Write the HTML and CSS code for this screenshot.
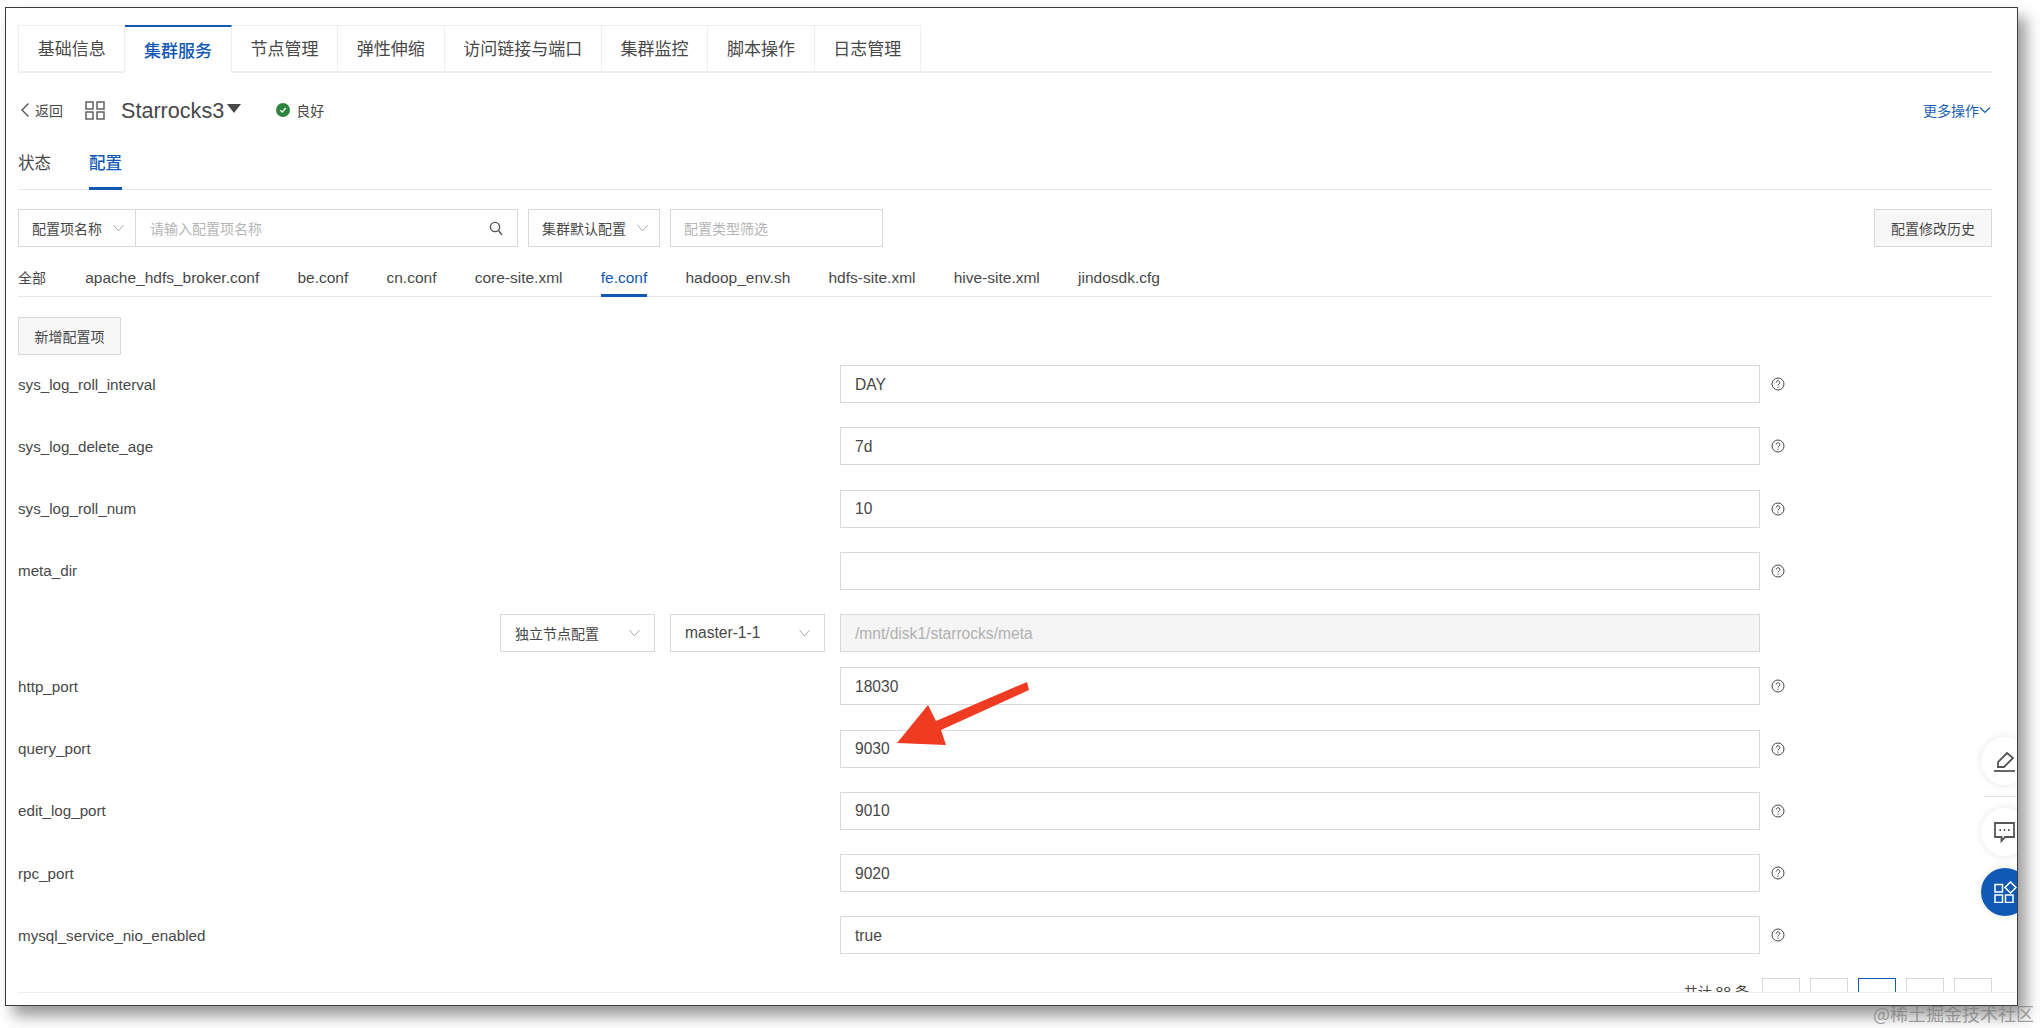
FILE: index.html
```html
<!DOCTYPE html>
<html lang="zh-CN">

<head>
    <meta charset="UTF-8">
    <meta name="viewport" content="width=device-width, initial-scale=1.0">
    <title>Starrocks3 配置</title>
    <link rel="stylesheet" href="styles.css">
</head>

<body>
    <div class="window">
        <div class="main-tabs">
            <div class="main-tab">基础信息</div>
            <div class="main-tab active">集群服务</div>
            <div class="main-tab">节点管理</div>
            <div class="main-tab">弹性伸缩</div>
            <div class="main-tab">访问链接与端口</div>
            <div class="main-tab">集群监控</div>
            <div class="main-tab">脚本操作</div>
            <div class="main-tab">日志管理</div>
        </div>

        <div class="title-row">
            <div class="back">
                <svg width="10" height="16" viewBox="0 0 10 16"><path d="M8.500 1.500 2 8l6.500 6.500" class="line"/></svg>
                <span>返回</span>
            </div>
            <svg class="grid-icon" width="20" height="19" viewBox="0 0 20 19">
                <rect x="1" y="1" width="7" height="7" class="line"/>
                <rect x="12" y="1" width="7" height="7" class="line"/>
                <rect x="1" y="11" width="7" height="7" class="line"/>
                <rect x="12" y="11" width="7" height="7" class="line"/>
            </svg>
            <span class="cluster-name">Starrocks3</span>
            <span class="caret"></span>
            <svg class="status-icon" width="14" height="14" viewBox="0 0 14 14">
                <circle cx="7" cy="7" r="7" fill="#2e8540"/>
                <path d="M4.200 7.200 6.200 9.200 9.800 5" fill="none" stroke="#fff" stroke-width="1.200"/>
            </svg>
            <span class="status-text">良好</span>
            <div class="more">更多操作
                <svg width="12" height="8" viewBox="0 0 12 8"><path d="M1 1.500 6 6.500l5-5" fill="none" stroke="#1b5fb5" stroke-width="1.200"/></svg>
            </div>
        </div>

        <div class="sub-tabs">
            <div class="sub-tab">状态</div>
            <div class="sub-tab active">配置</div>
        </div>

        <div class="filter-row">
            <div class="search-group">
                <div class="select name-select">配置项名称<svg class="chev" width="11" height="8" viewBox="0 0 11 8"><path d="M.5 1 5.500 7l5-6"/></svg></div>
                <div class="search-input">
                    <span class="placeholder">请输入配置项名称</span>
                    <svg width="14" height="15" viewBox="0 0 14 15"><circle cx="6" cy="6" r="4.600" class="line"/><path d="M9.500 9.500 13 14" class="line"/></svg>
                </div>
            </div>
            <div class="select default-select">集群默认配置<svg class="chev" width="11" height="8" viewBox="0 0 11 8"><path d="M.5 1 5.500 7l5-6"/></svg></div>
            <div class="select type-select"><span class="placeholder">配置类型筛选</span></div>
            <div class="btn history-btn">配置修改历史</div>
        </div>

        <div class="file-tabs">
            <div class="file-tab">全部</div>
            <div class="file-tab">apache_hdfs_broker.conf</div>
            <div class="file-tab">be.conf</div>
            <div class="file-tab">cn.conf</div>
            <div class="file-tab">core-site.xml</div>
            <div class="file-tab active">fe.conf</div>
            <div class="file-tab">hadoop_env.sh</div>
            <div class="file-tab">hdfs-site.xml</div>
            <div class="file-tab">hive-site.xml</div>
            <div class="file-tab">jindosdk.cfg</div>
        </div>

        <div class="btn add-btn">新增配置项</div>

        <div class="form">
            <div class="row">
                <div class="label">sys_log_roll_interval</div>
                <div class="field">DAY</div>
                <svg class="help" viewBox="0 0 14 14"><use href="#help"/></svg>
            </div>
            <div class="row">
                <div class="label">sys_log_delete_age</div>
                <div class="field">7d</div>
                <svg class="help" viewBox="0 0 14 14"><use href="#help"/></svg>
            </div>
            <div class="row">
                <div class="label">sys_log_roll_num</div>
                <div class="field">10</div>
                <svg class="help" viewBox="0 0 14 14"><use href="#help"/></svg>
            </div>
            <div class="row">
                <div class="label">meta_dir</div>
                <div class="field"></div>
                <svg class="help" viewBox="0 0 14 14"><use href="#help"/></svg>
            </div>
            <div class="row node-row">
                <div class="select node-select">独立节点配置<svg class="chev" width="11" height="8" viewBox="0 0 11 8"><path d="M.5 1 5.500 7l5-6"/></svg></div>
                <div class="select node-select node-name">master-1-1<svg class="chev" width="11" height="8" viewBox="0 0 11 8"><path d="M.5 1 5.500 7l5-6"/></svg></div>
                <div class="field disabled">/mnt/disk1/starrocks/meta</div>
            </div>
            <div class="row">
                <div class="label">http_port</div>
                <div class="field">18030</div>
                <svg class="help" viewBox="0 0 14 14"><use href="#help"/></svg>
            </div>
            <div class="row">
                <div class="label">query_port</div>
                <div class="field">9030</div>
                <svg class="help" viewBox="0 0 14 14"><use href="#help"/></svg>
            </div>
            <div class="row">
                <div class="label">edit_log_port</div>
                <div class="field">9010</div>
                <svg class="help" viewBox="0 0 14 14"><use href="#help"/></svg>
            </div>
            <div class="row">
                <div class="label">rpc_port</div>
                <div class="field">9020</div>
                <svg class="help" viewBox="0 0 14 14"><use href="#help"/></svg>
            </div>
            <div class="row">
                <div class="label">mysql_service_nio_enabled</div>
                <div class="field">true</div>
                <svg class="help" viewBox="0 0 14 14"><use href="#help"/></svg>
            </div>
        </div>

        <div class="pager">
            <span class="total">共计 88 条</span>
            <div class="page"></div>
            <div class="page"></div>
            <div class="page current"></div>
            <div class="page"></div>
            <div class="page"></div>
        </div>
        <div class="footer-line"></div>

        <!-- floating tools on the right edge -->
        <div class="float-btn pen">
            <svg width="21" height="21" viewBox="0 0 21 21"><path d="M4 16v-5l9-9 6 5-9 9z" class="line-dark"/><path d="M0 20h21" class="line-dark"/></svg>
        </div>
        <div class="float-sep"></div>
        <div class="float-btn chat">
            <svg width="21" height="21" viewBox="0 0 21 21"><path d="M1 1h19v14H11l-3.500 4v-4H1z" class="line-dark"/><path d="M5.500 8h1.500M9.800 8h1.500M14 8h1.500" class="line-dark"/></svg>
        </div>
        <div class="float-btn apps">
            <svg width="23" height="22" viewBox="0 0 23 22">
                <rect x="1" y="3.500" width="7.500" height="7.500" class="line-white"/>
                <rect x="1" y="14" width="7.500" height="7.500" class="line-white"/>
                <rect x="11.500" y="14" width="7.500" height="7.500" class="line-white"/>
                <path d="M16.500 1l5.500 5.500-5.500 5.500-5.500-5.500z" class="line-white"/>
            </svg>
        </div>

        <svg class="arrow" width="145" height="75" viewBox="0 0 145 75">
            <path d="M7 68 38 30 46 46 137 7 139 15 51 55 56 70z" fill="#ee3b22"/>
        </svg>
    </div>

    <div class="watermark">@稀土掘金技术社区</div>

    <svg width="0" height="0" class="defs">
        <symbol id="help" viewBox="0 0 14 14">
            <circle cx="7" cy="7" r="6" fill="none" stroke="#444" stroke-width="1"/>
            <path d="M5.200 5.500a1.800 1.800 0 1 1 2.800 1.500c-.7.4-1 .8-1 1.500" fill="none" stroke="#444" stroke-width="1"/>
            <circle cx="7" cy="10.200" r=".6" fill="#444"/>
        </symbol>
    </svg>
</body>

</html>
```

FILE: styles.css
```css
* {
    box-sizing: border-box;
}

body {
    margin: 0;
    height: 1028px;
    overflow: hidden;
    position: relative;
    background-color: #fff;
    font-family: "Liberation Sans", "Noto Sans CJK SC", sans-serif;
    font-size: 14px;
    color: #484848;
}

.line {
    fill: none;
    stroke: #555;
    stroke-width: 1.4;
}

.line-dark {
    fill: none;
    stroke: #555;
    stroke-width: 1.800;
}

.line-white {
    fill: none;
    stroke: #fff;
    stroke-width: 1.500;
}

.defs {
    position: absolute;
}

.window {
    position: relative;
    width: 2013px;
    height: 999px;
    margin: 7px 0 0 5px;
    padding: 17px 25px 0 12px;
    background-color: #fff;
    border: 1px solid #3c3c3c;
    box-shadow: 8px 10px 14px rgba(0, 0, 0, 0.4);
    overflow: hidden;
}

.main-tabs {
    display: flex;
    height: 48px;
    border-bottom: 2px solid #eee;
}

.main-tab {
    display: flex;
    align-items: center;
    justify-content: center;
    height: 47px;
    padding: 0 18.700px 2px;
    font-size: 17px;
    background-color: #fff;
    border: 1px solid #eee;
    border-left: none;
}

.main-tab:first-child {
    border-left: 1px solid #eee;
}

.main-tab.active {
    height: 48px;
    color: #1259b4;
    font-weight: 500;
    border-top: 2px solid #1259b4;
    border-bottom: none;
}

.title-row {
    display: flex;
    align-items: center;
    height: 74px;
    padding-right: 1px;
}

.back {
    display: flex;
    align-items: center;
    gap: 5px;
    width: 67px;
    padding-left: 2px;
}

.grid-icon {
    margin-right: 16px;
}

.cluster-name {
    font-size: 21.600px;
    padding-top: 2px;
}

.caret {
    width: 0;
    height: 0;
    margin: -4px 35px 0 3px;
    border-left: 7px solid transparent;
    border-right: 7px solid transparent;
    border-top: 9px solid #484848;
}

.status-text {
    margin-left: 6px;
}

.more {
    display: flex;
    align-items: center;
    margin-left: auto;
    color: #1b5fb5;
}

.sub-tabs {
    display: flex;
    gap: 38px;
    height: 43px;
    border-bottom: 1px solid #e6e6e6;
}

.sub-tab {
    height: 43px;
    font-size: 16.500px;
    line-height: 22px;
    padding-top: 5px;
}

.sub-tab.active {
    color: #1259b4;
    font-weight: 500;
    border-bottom: 3px solid #1259b4;
}

.filter-row {
    display: flex;
    align-items: center;
    margin-top: 19px;
    height: 38px;
}

.search-group {
    display: flex;
    width: 500px;
    margin-right: 10px;
}

.select {
    display: flex;
    align-items: center;
    justify-content: space-between;
    height: 38px;
    padding: 0 11px 0 13px;
    background-color: #fff;
    border: 1px solid #d9d9d9;
}

.chev {
    flex-shrink: 0;
    fill: none;
    stroke: #aaa;
    stroke-width: 1;
}

.name-select {
    width: 118px;
}

.search-input {
    display: flex;
    align-items: center;
    justify-content: space-between;
    flex: 1;
    height: 38px;
    padding: 0 14px;
    border: 1px solid #d9d9d9;
    border-left: none;
}

.placeholder {
    color: #b5b5b5;
}

.default-select {
    width: 132px;
    margin-right: 10px;
}

.type-select {
    width: 213px;
}

.btn {
    display: flex;
    align-items: center;
    justify-content: center;
    height: 38px;
    background-color: #f7f7f7;
    border: 1px solid #d9d9d9;
}

.history-btn {
    width: 118px;
    margin-left: auto;
}

.file-tabs {
    display: flex;
    gap: 38.200px;
    height: 50px;
    border-bottom: 1px solid #e6e6e6;
}

.file-tab {
    height: 50px;
    padding-top: 21px;
    line-height: 20px;
    font-size: 15.500px;
}

.file-tab:first-child {
    font-size: 14px;
    margin-right: 1px;
}

.file-tab.active {
    color: #1259b4;
    font-weight: 500;
    border-bottom: 3px solid #1259b4;
}

.add-btn {
    width: 103px;
    margin-top: 20px;
}

.form {
    display: flex;
    flex-direction: column;
    gap: 24.300px;
    margin-top: 10px;
}

.row {
    display: flex;
    align-items: center;
    height: 38px;
}

.label {
    width: 822px;
    font-size: 15.200px;
}

.field {
    display: flex;
    align-items: center;
    width: 920px;
    height: 38px;
    padding: 1px 14px 0;
    font-size: 15.600px;
    border: 1px solid #d9d9d9;
}

.field.disabled {
    color: #b0b0b0;
    background-color: #f5f5f5;
}

.help {
    width: 14px;
    height: 14px;
    margin-left: 11px;
}

.node-row {
    gap: 15px;
    padding-left: 482px;
    margin-bottom: -9.200px;
}

.node-select {
    width: 155px;
    padding: 0 14px 0 14px;
}

.node-name {
    font-size: 15.600px;
}

.pager {
    position: absolute;
    top: 970px;
    right: 25px;
    display: flex;
    align-items: flex-start;
    gap: 10px;
    height: 14px;
    overflow: hidden;
}

.total {
    margin-right: 3px;
    line-height: 22px;
    padding-top: 3px;
}

.page {
    width: 38px;
    height: 30px;
    border: 1px solid #d9d9d9;
}

.page.current {
    border: 1px solid #1259b4;
}

.footer-line {
    position: absolute;
    top: 984px;
    left: 12px;
    right: 0;
    height: 1px;
    background-color: #eee;
}

.float-btn {
    position: absolute;
    left: 1975px;
    display: flex;
    align-items: center;
    padding-left: 13px;
    width: 48px;
    height: 48px;
    border-radius: 50%;
    background-color: #fff;
    box-shadow: 0 0 8px rgba(0, 0, 0, 0.1);
}

.pen {
    top: 729px;
}

.float-sep {
    position: absolute;
    top: 788px;
    left: 1978px;
    width: 32px;
    height: 1px;
    background-color: #e6e6e6;
}

.chat {
    top: 800px;
}

.apps {
    top: 860px;
    background-color: #1259b4;
}

.arrow {
    position: absolute;
    left: 884px;
    top: 667px;
}

.watermark {
    position: absolute;
    left: 1873px;
    top: 1000px;
    font-family: "Noto Sans CJK SC", sans-serif;
    font-size: 18px;
    color: rgba(120, 120, 120, 0.7);
}
```
